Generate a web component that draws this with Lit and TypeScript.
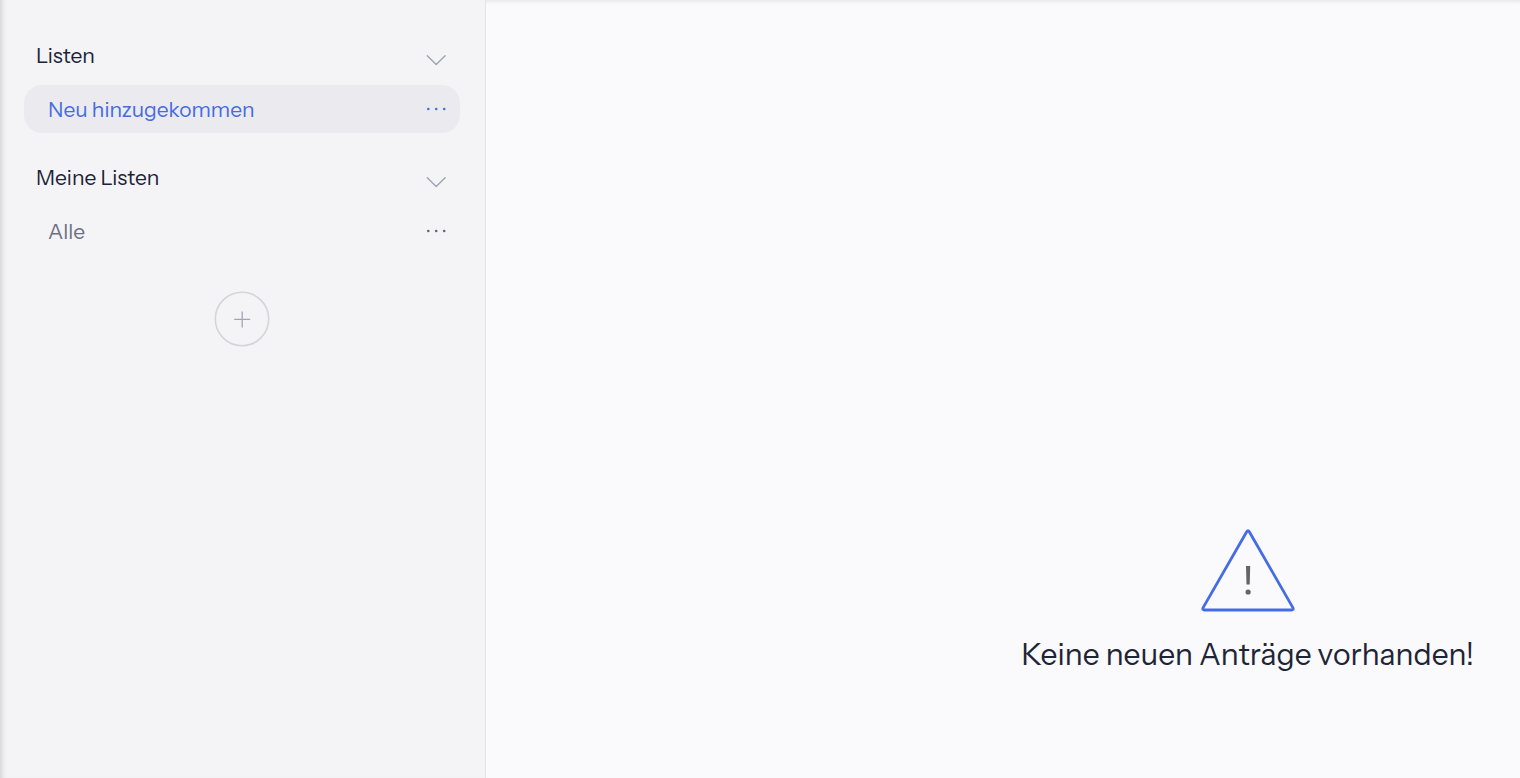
import { LitElement, html, css, svg } from "lit";
import { customElement, property, state } from "lit/decorators.js";

const dots = svg`<circle cx="2.3" cy="2" r="1.3"/><circle cx="10.2" cy="2" r="1.3"/><circle cx="18.2" cy="2" r="1.3"/>`;

@customElement("list-group")
export class ListGroup extends LitElement {
  @property() heading = "";
  @property() entry = "";
  @property({ type: Boolean }) current = false;
  @state() private open = true;

  static styles = css`
    :host { display: block; }
    button { font: inherit; color: inherit; background: none; border: 0; padding: 0; cursor: pointer; }
    .head {
      display: flex; align-items: center; justify-content: space-between;
      width: 100%; height: 60px; padding: 0 14px 0 12px;
      box-sizing: border-box; text-align: left; color: #1b2338;
    }
    .label { padding-top: 2px; }
    .chevron { display: block; margin-top: 10px; fill: none; stroke: #a0a2b2; stroke-width: 1.4; stroke-linecap: round; stroke-linejoin: round; }
    .row {
      display: flex; align-items: center; justify-content: space-between;
      height: 48px; padding: 0 14px 0 24px; border-radius: 18px; color: #6c7083;
    }
    .row.current { background: #ebebef; color: #456ce2; }
    a { color: inherit; text-decoration: none; }
    .more { display: flex; align-items: center; height: 24px; }
    .more svg { fill: #626577; }
    .current .more svg { fill: #456ce2; }
  `;

  render() {
    return html`
      <button class="head" aria-expanded=${this.open} @click=${() => (this.open = !this.open)}>
        <span class="label">${this.heading}</span>
        <svg class="chevron" width="20" height="12" viewBox="0 0 20 12" aria-hidden="true">
          <path d="M1.3 1.8 10.2 10.6 19.1 1.8" />
        </svg>
      </button>
      ${this.open
        ? html`<div class="row ${this.current ? "current" : ""}">
            <a class="label" href="#">${this.entry}</a>
            <button class="more" aria-label="Optionen">
              <svg width="20" height="4" viewBox="0 0 20 4" aria-hidden="true">${dots}</svg>
            </button>
          </div>`
        : ""}
    `;
  }
}

@customElement("app-root")
export class AppRoot extends LitElement {
  static styles = css`
    :host {
      display: flex; min-height: 100vh; background: #fafafc; color: #1d2536;
      font-family: "Instrument Sans", Inter, "Liberation Sans", sans-serif;
      font-size: 21px; line-height: 28px;
    }
    .side {
      display: flex; flex-direction: column; gap: 14px;
      width: 32%; box-sizing: border-box; padding: 25px 25px 24px 24px;
      background: #f4f4f6; border-right: 1px solid #e3e3e9;
      box-shadow: inset 6px 0 5px -4px #d2d2d6;
    }
    .add {
      align-self: center; margin-top: 22px; padding: 0;
      border: 0; border-radius: 50%; background: none; cursor: pointer;
    }
    .add svg { display: block; fill: none; }
    .ring { stroke: #d3d4dc; stroke-width: 1.6; }
    .plus { stroke: #a3a5b4; stroke-width: 1.3; }
    .main {
      flex: 1; display: flex; align-items: flex-end; justify-content: flex-end;
      padding: 0 46px 103px 24px;
      box-shadow: inset 0 4px 3px -2px #e9e9ec;
    }
    .empty { display: flex; flex-direction: column; align-items: center; gap: 22px; }
    .message { margin: 0; font-size: 30px; line-height: 40px; }
  `;

  render() {
    return html`
      <nav class="side">
        <list-group heading="Listen" entry="Neu hinzugekommen" current></list-group>
        <list-group heading="Meine Listen" entry="Alle"></list-group>
        <button class="add" aria-label="Liste hinzufügen">
          <svg width="56" height="56" viewBox="0 0 56 56" aria-hidden="true">
            <circle class="ring" cx="28" cy="28" r="26.7" />
            <path class="plus" d="M28.2 20.4v16M20.2 28.4h16" />
          </svg>
        </button>
      </nav>
      <main class="main">
        <div class="empty">
          <svg width="94" height="84" viewBox="0 0 94 84" aria-hidden="true">
            <path d="M45.7 2.7 2 78.9Q1.2 81 3.5 81H90.5Q92.8 81 92 78.9L48.3 2.7Q47 .8 45.7 2.7Z"
              fill="none" stroke="#456ce2" stroke-width="2.8" stroke-linejoin="round" />
            <path d="M45 37h4.2l-.5 18.6h-3.2Z" fill="#646465" />
            <circle cx="47.1" cy="63" r="2.6" fill="#646465" />
          </svg>
          <p class="message">Keine neuen Anträge vorhanden!</p>
        </div>
      </main>
    `;
  }
}
